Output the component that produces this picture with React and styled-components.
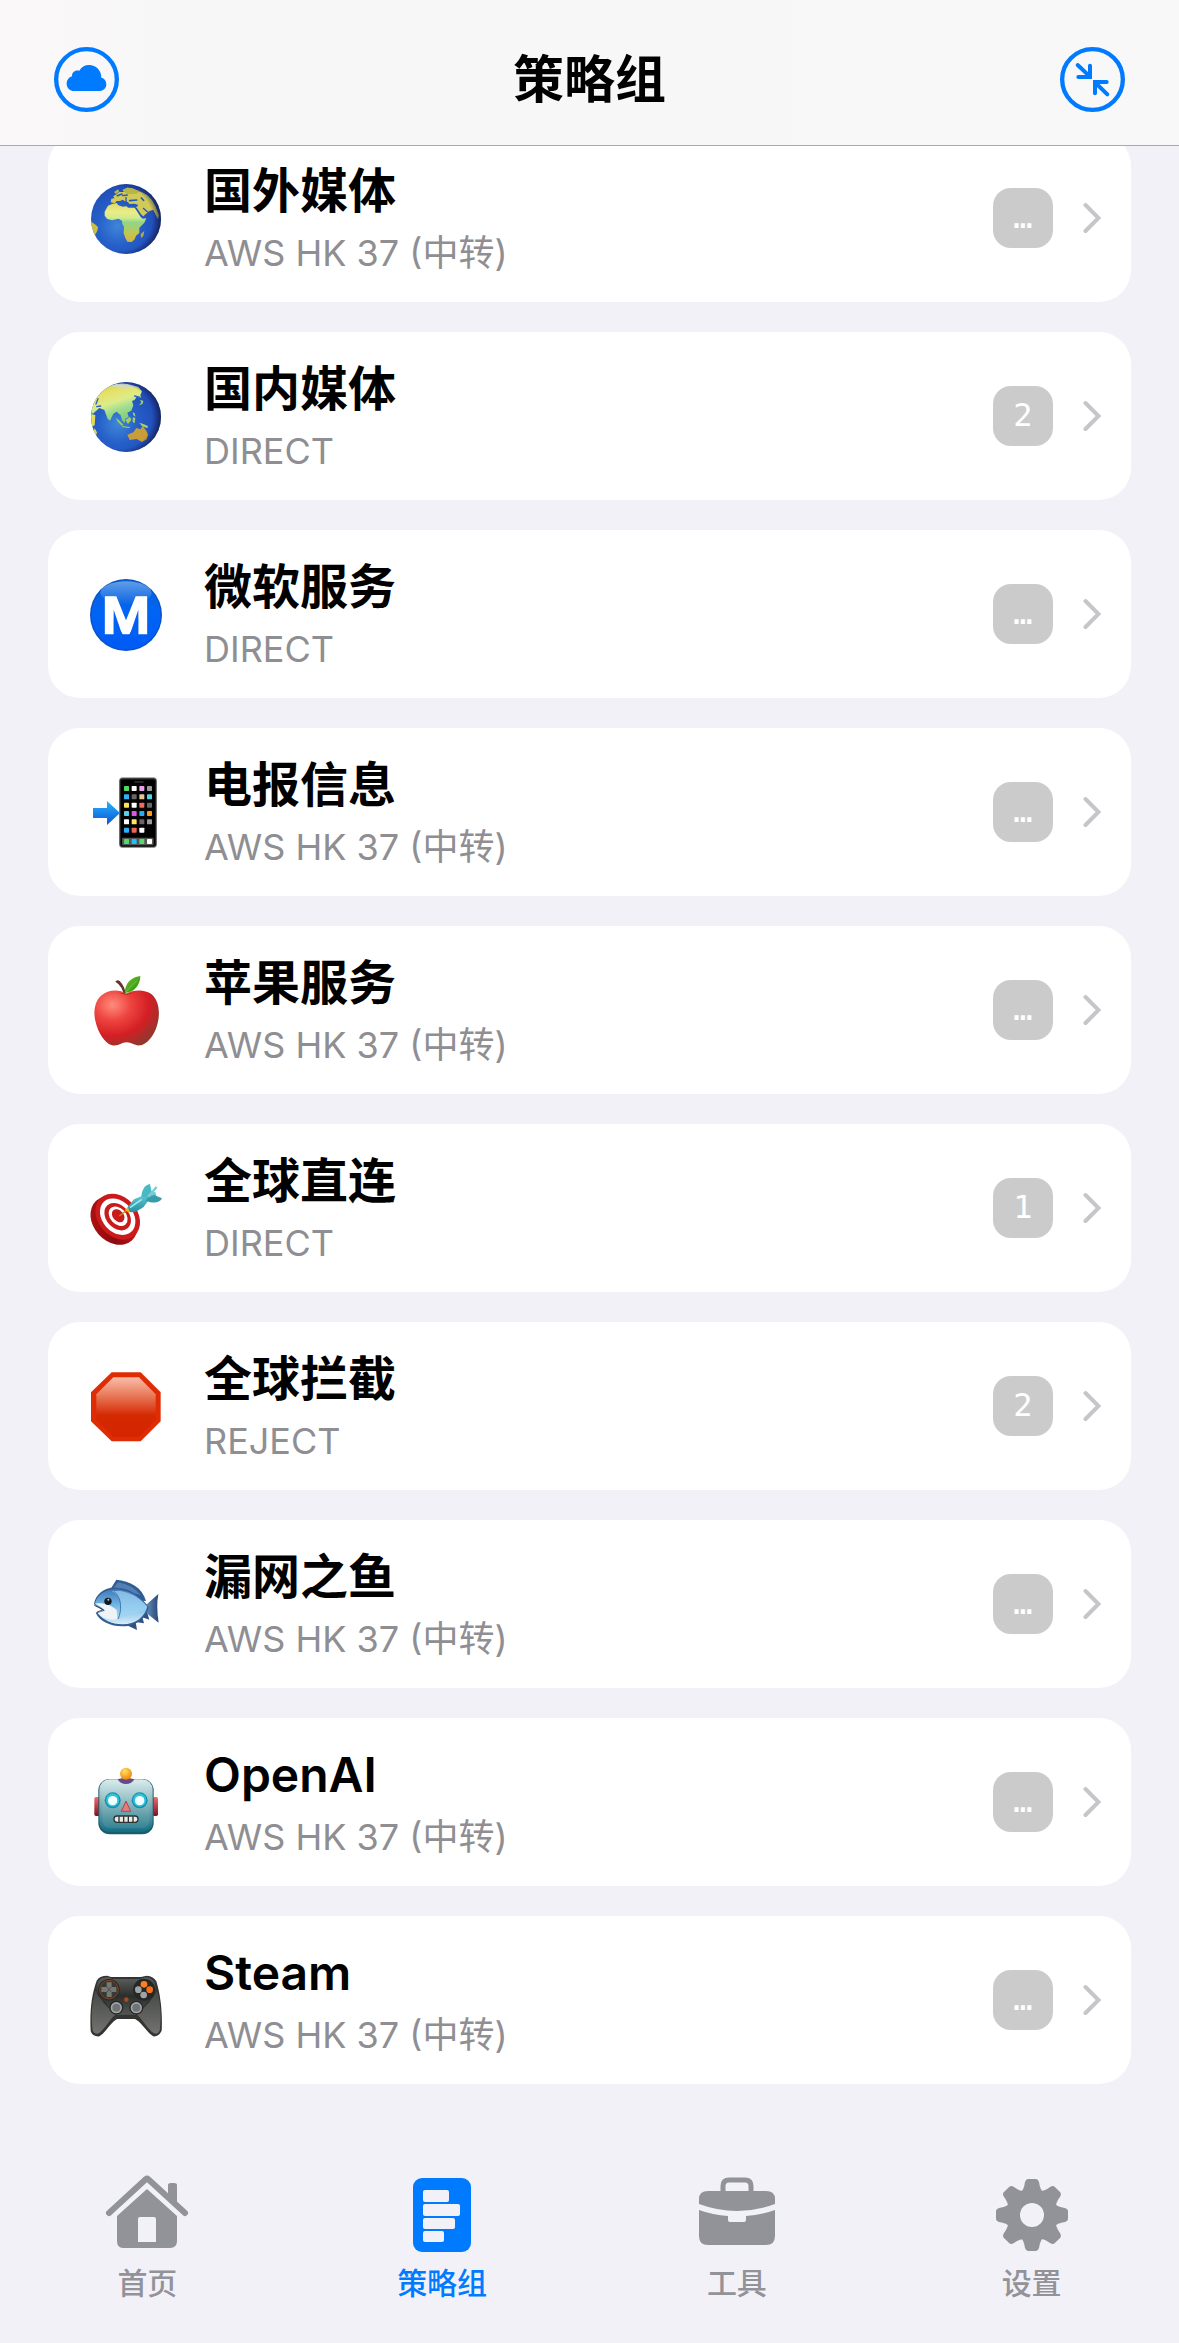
import React from "react";
import styled, { createGlobalStyle } from "styled-components";

const GlobalStyle = createGlobalStyle`
  *, *::before, *::after { box-sizing: border-box; }
  body {
    margin: 0;
    background: #f2f1f8;
    color: #000;
    font-family: Inter, "Noto Sans CJK SC", sans-serif;
  }
`;

const Screen = styled.div`
  display: flex;
  flex-direction: column;
  min-height: 100vh;
`;

const Header = styled.header`
  position: sticky;
  top: 0;
  z-index: 1;
  display: flex;
  align-items: center;
  justify-content: space-between;
  padding: 40px 54px 26px;
  background: linear-gradient(90deg, #faf8f8, #f7f7f7 25%, #f8f8f9);
  border-bottom: 1px solid #a9a8ae;
`;

const Title = styled.h1`
  margin: 0;
  font-size: 51px;
  line-height: 79px;
  font-weight: 600;
`;

const RoundButton = styled.button`
  display: flex;
  width: 65px;
  height: 65px;
  padding: 0;
  border: 0;
  border-radius: 50%;
  background: none;
  color: #007aff;
  cursor: pointer;
`;

const List = styled.ul`
  display: flex;
  flex-direction: column;
  gap: 30px;
  margin: -12px 0 0;
  padding: 0 48px;
  list-style: none;
`;

const Card = styled.button`
  display: flex;
  align-items: center;
  gap: 42px;
  width: 100%;
  height: 168px;
  padding: 0 30px 0 42px;
  border: 0;
  border-radius: 32px;
  background: #fff;
  color: inherit;
  font: inherit;
  text-align: left;
  cursor: pointer;
`;

const Emoji = styled.svg`
  flex: none;
  width: 72px;
  height: 72px;
  overflow: visible;
`;

const Texts = styled.span`
  display: flex;
  flex: 1;
  flex-direction: column;
  min-width: 0;
  padding-top: 4px;
`;

const Name = styled.span`
  font-size: 48px;
  line-height: 66px;
  font-weight: 600;
`;

const Selected = styled.span`
  font-size: 36px;
  line-height: 58px;
  color: #8e8e93;
`;

const Trailing = styled.span`
  display: flex;
  align-items: center;
  gap: 30px;
`;

const Count = styled.span`
  width: 60px;
  height: 60px;
  border-radius: 18px;
  background: #cbcbcb;
  color: #fff;
  font-family: "DejaVu Sans Mono", monospace;
  font-size: 32px;
  line-height: 58px;
  text-align: center;
`;

const TabBar = styled.nav`
  display: grid;
  grid-template-columns: repeat(4, 1fr);
  margin-top: auto;
  padding: 24px 0 40px;
`;

const Tab = styled.a`
  display: flex;
  flex-direction: column;
  align-items: center;
  gap: 10px;
  color: ${(p) => (p.$active ? "#007aff" : "#929299")};
  font-size: 30px;
  line-height: 40px;
  font-weight: 500;
  text-decoration: none;
`;

const TabIcon = styled.svg`
  width: 84px;
  height: 80px;
`;

const Chevron = () => (
  <svg width="18" height="32" viewBox="0 0 18 32" fill="none" stroke="#c5c5ca" strokeWidth="4" strokeLinecap="round" strokeLinejoin="miter" aria-hidden="true">
    <path d="M2.5 3 L15.5 16 L2.5 29" />
  </svg>
);

const CloudIcon = () => (
  <svg width="65" height="65" viewBox="42 51 195 195" aria-hidden="true">
    <circle cx="139.500" cy="148.500" r="91" fill="none" stroke="currentColor" strokeWidth="13" />
    <path fill="currentColor" d="M103 183C90 183 80 174 80 161C80 150 87 142 96 139C95 127 105 119 118 122C124 111 134 105 147 105C168 105 184 121 184 143C193 145 199 153 199 163C199 175 190 183 179 183Z" />
  </svg>
);

const CollapseIcon = () => (
  <svg width="65" height="65" viewBox="60 51 195 195" fill="none" stroke="currentColor" strokeLinecap="round" aria-hidden="true">
    <circle cx="157.500" cy="148.500" r="91" strokeWidth="13" />
    <g strokeWidth="12">
      <path d="M113 105L149 139" />
      <path d="M150 107V141H115" />
      <path d="M202 193L167 159" />
      <path d="M165 190V156H200" />
    </g>
  </svg>
);

const Grad = ({ id, from, to, mid }) => (
  <linearGradient id={id} x1="0" y1="0" x2="0" y2="1">
    <stop offset="0" stopColor={from} />
    {mid && <stop offset="0.5" stopColor={mid} />}
    <stop offset="1" stopColor={to} />
  </linearGradient>
);

const GlobeDefs = ({ id }) => (
  <defs>
    <radialGradient id={id} cx="0.38" cy="0.6" r="0.62">
      <stop offset="0" stopColor="#3f86d8" />
      <stop offset="0.45" stopColor="#265fc9" />
      <stop offset="1" stopColor="#1f49b4" />
    </radialGradient>
    <radialGradient id={id + "-shade"} cx="0.42" cy="0.5" r="0.6">
      <stop offset="0.76" stopColor="#101848" stopOpacity="0" />
      <stop offset="1" stopColor="#101030" stopOpacity="0.8" />
    </radialGradient>
    <linearGradient id={id + "-land"} gradientUnits="userSpaceOnUse" x1="0" y1="6" x2="0" y2="216">
      <stop offset="0" stopColor="#b5b440" />
      <stop offset="0.25" stopColor="#ddd95c" />
      <stop offset="0.4" stopColor="#e9ec88" />
      <stop offset="0.48" stopColor="#d6ea8c" />
      <stop offset="0.55" stopColor="#93d586" />
      <stop offset="0.64" stopColor="#a9cf69" />
      <stop offset="0.74" stopColor="#cfbf4a" />
      <stop offset="1" stopColor="#c8a53a" />
    </linearGradient>
    <linearGradient id={id + "-east"} gradientUnits="userSpaceOnUse" x1="20" y1="10" x2="60" y2="130">
      <stop offset="0" stopColor="#c9cb58" />
      <stop offset="0.3" stopColor="#e6e168" />
      <stop offset="0.55" stopColor="#dcec8a" />
      <stop offset="0.75" stopColor="#a0dd90" />
      <stop offset="1" stopColor="#84cc7c" />
    </linearGradient>
    <clipPath id={id + "-clip"}>
      <circle cx="108" cy="111" r="105" />
    </clipPath>
  </defs>
);

const GlobeAfrica = () => (
  <Emoji viewBox="0 0 216 216" aria-hidden="true">
    <GlobeDefs id="africa" />
    <circle cx="108" cy="111" r="105" fill="url(#africa)" />
    <g clipPath="url(#africa-clip)">
      <path fill="url(#africa-land)" d="M54 71L66 66 80 63 85 70 98 74 110 73 114 77 134 77 140 86 152 105 158 110 169 109 163 122 148 137 148 153 138 161 134 172 125 180 112 179 106 168 101 154 102 134 97 126 96 117 86 110 66 115 52 111 44 101 44 89Z" />
      <path fill="#d2ca56" d="M62 61L64 50 73 49 70 42 80 37 88 30 102 30 98 24 112 17 126 19 140 25 156 31 172 40 186 54 197 74 207 100 204 112 198 100 190 84 180 86 174 90 160 103 148 94 137 78 145 69 134 65 118 66 114 60 105 58 98 53 90 57 80 57 74 64Z" />
      <path fill="#b5b646" d="M72 30L84 22 88 29 78 36ZM98 24L112 17 126 19 148 27 140 36 110 36Z" />
      <path fill="#c9bf45" d="M0 118C8 122 22 130 24 137 23 150 15 158 8 166L0 160Z" />
      <path fill="#c8a53a" d="M152 156L163 147 160 162 153 168Z" />
      <g fill="none" stroke="#2457bc" strokeLinecap="round">
        <path strokeWidth="5" d="M88 60L102 61 114 68 134 70M119 56L140 54M154 48L161 55M82 41L96 36" />
        <path strokeWidth="4" d="M139 79L155 103M160 79L172 89M98 41L112 39M108 46V63" />
      </g>
    </g>
    <circle cx="108" cy="111" r="105" fill="url(#africa-shade)" />
  </Emoji>
);

const GlobeAsia = () => (
  <Emoji viewBox="0 0 216 216" aria-hidden="true">
    <GlobeDefs id="asia" />
    <circle cx="108" cy="111" r="105" fill="url(#asia)" />
    <g clipPath="url(#asia-clip)">
      <path fill="url(#asia-east)" d="M2 84L8 64 22 44 38 28 60 18 90 12 120 16 144 20 156 34 151 46 154 54 140 50 134 60 126 63 130 76 124 92 112 98 116 111 106 116 104 129 96 120 92 106 80 95 70 101 60 122 53 116 43 90 28 84 18 93 8 102 3 92Z" />
      <path fill="#e2dc58" d="M3 102L16 105 14 136 4 140ZM14 145L21 157 18 166 10 156Z" />
      <path fill="#cfd8c4" d="M60 18Q92 4 132 17L144 25 118 21 100 26 78 20Z" />
      <path fill="#c99d38" d="M112 164L130 157 139 144 151 148 158 138 169 152 174 164 170 178 156 186 140 177 119 180Z" />
      <path fill="#a0d064" d="M78 114L86 120 100 134 96 138 82 124ZM106 120L120 110 124 120 114 132ZM96 138L120 141 118 144 98 142ZM148 128L160 132 174 138 172 145 156 139ZM128 112L136 114 134 130 128 126ZM128 96L134 100 137 110 130 106ZM150 60L160 62 158 72 146 76 154 68Z" />
      <path fill="none" stroke="#2b62c2" strokeWidth="4" strokeLinecap="round" d="M24 56L18 72M20 80L32 78M134 48L150 52" />
    </g>
    <circle cx="108" cy="111" r="105" fill="url(#asia-shade)" />
  </Emoji>
);

const Metro = () => (
  <Emoji viewBox="150 114 216 216" aria-hidden="true">
    <defs>
      <Grad id="metro" from="#0a62d6" mid="#0064f6" to="#0059f4" />
      <Grad id="metro-shine" from="#6ea8ea" to="#0f66e4" />
    </defs>
    <circle cx="258" cy="225" r="108" fill="#0752c4" />
    <circle cx="258" cy="225" r="104" fill="url(#metro)" />
    <ellipse cx="258" cy="158" rx="77" ry="34" fill="url(#metro-shine)" opacity="0.85" />
    <path fill="none" stroke="#fff" strokeWidth="27" strokeLinejoin="miter" d="M208 283V170M308 283V170" />
    <path fill="#fff" d="M195 169H229L258 241 287 169H321V195L268 283H248L195 195Z" />
    <path fill="#0261f3" d="M221 209V283H246ZM295 209V283H270Z" />
  </Emoji>
);

const APPS = [
  ["#54d863", "#fff", "#e5a2f0", "#999"],
  ["#2fb2f8", "#666", "#e7c39a", "#4bd7e8"],
  ["#ffe15a", "#fff", "#f26a5d", "#666"],
  ["#57cfe4", "#d958e0", "#2aa9f6", "#ff9a16"],
  ["#fff", "#ffe566", "#666", "#999"],
  ["#27b1fa", "#ef655c", "#fff"],
];

const Phone = () => (
  <Emoji viewBox="150 708 216 216" aria-hidden="true">
    <defs>
      <Grad id="arrow" from="#2bb0fb" to="#0957d6" />
    </defs>
    <rect x="237" y="712" width="114" height="212" rx="11" fill="#969696" />
    <rect x="239" y="715" width="110" height="206" rx="9" fill="#222" />
    <rect x="243" y="719" width="102" height="198" rx="5" fill="#000" />
    <rect x="283" y="724" width="28" height="4" rx="2" fill="#333" />
    <rect x="246" y="893" width="95" height="23" rx="4" fill="#555" />
    {APPS.map((row, y) =>
      row.map((fill, x) => (
        <rect key={x + "-" + y} x={252 + x * 23} y={738 + y * 25} width="15" height="15" rx="2" fill={fill} />
      ))
    )}
    {["#55d86a", "#25bdfa", "#54dc68", "#fff"].map((fill, x) => (
      <rect key={fill} x={252 + x * 23} y="897" width="15" height="15" rx="2" fill={fill} />
    ))}
    <path fill="url(#arrow)" d="M159 804H201V783L240 819 201 855V834H159Z" />
  </Emoji>
);

const Apple = () => (
  <Emoji viewBox="150 102 216 216" aria-hidden="true">
    <defs>
      <radialGradient id="apple" cx="0.28" cy="0.26" r="0.8">
        <stop offset="0" stopColor="#ff8d7d" />
        <stop offset="0.35" stopColor="#ee4540" />
        <stop offset="0.7" stopColor="#d41f24" />
        <stop offset="1" stopColor="#97352d" />
      </radialGradient>
      <linearGradient id="leaf" x1="0" y1="0" x2="1" y2="1">
        <stop offset="0" stopColor="#6fc529" />
        <stop offset="1" stopColor="#278d10" />
      </linearGradient>
    </defs>
    <path fill="url(#apple)" d="M259 161C236 146 203 150 183 167C163 185 160 218 166 242C174 279 194 309 216 316C236 320 243 307 260 307C278 307 283 320 306 315C330 306 349 275 355 240C360 208 354 180 335 163C313 147 280 149 259 161Z" />
    <path fill="#b42823" d="M235 157Q260 172 286 155Q261 166 235 157Z" />
    <path fill="#61362a" d="M226 125Q231 117 239 123Q254 139 257 160L251 160Q246 142 235 132Z" />
    <path fill="url(#leaf)" d="M254 159C255 130 272 112 301 108C301 134 282 159 254 159Z" />
    <path d="M257 156L291 121" stroke="#8cce52" strokeWidth="2" />
  </Emoji>
);

const Target = () => (
  <Emoji viewBox="150 696 216 216" aria-hidden="true">
    <defs>
      <linearGradient id="rim" x1="0" y1="0" x2="1" y2="1">
        <stop offset="0" stopColor="#b91315" />
        <stop offset="0.5" stopColor="#8d0a0d" />
        <stop offset="1" stopColor="#cf1b1c" />
      </linearGradient>
      <Grad id="dart" from="#75dbe5" to="#278c9c" />
    </defs>
    <ellipse cx="222" cy="842" rx="62" ry="80" transform="rotate(-42 222 842)" fill="url(#rim)" />
    <g transform="rotate(-42 233 830)">
      <ellipse cx="233" cy="830" rx="59" ry="76" fill="#cb1a1c" />
      <ellipse cx="233" cy="830" rx="46" ry="61" fill="#fff" />
      <ellipse cx="233" cy="830" rx="34" ry="46" fill="#c81b1c" />
      <ellipse cx="235" cy="830" rx="24" ry="33" fill="#fff" />
      <ellipse cx="236" cy="829" rx="16" ry="22" fill="#c81b1c" />
    </g>
    <path d="M238 828L264 808" stroke="#b88a19" strokeWidth="4" />
    <path fill="#e4b91e" d="M255 810L264 800 273 812 267 818Z" />
    <path fill="url(#dart)" d="M263 801L282 778 304 769 319 750 346 756 351 775 326 781 310 802 286 816 270 817Z" />
    <path fill="#47bac5" d="M304 769C306 747 316 734 330 732L335 756 322 774Z" />
    <path fill="#369baa" d="M322 774L342 765 366 775C361 788 342 792 317 782Z" />
    <path d="M324 770L350 741" stroke="#7dcad1" strokeWidth="7" />
    <path d="M270 803L305 778" stroke="#a4eff2" strokeWidth="4" />
  </Emoji>
);

const StopSign = () => (
  <Emoji viewBox="150 90 216 216" aria-hidden="true">
    <defs>
      <linearGradient id="stop" x1="0" y1="0" x2="0" y2="1">
        <stop offset="0" stopColor="#f9bda9" />
        <stop offset="0.3" stopColor="#e97b5b" />
        <stop offset="0.64" stopColor="#d42902" />
        <stop offset="1" stopColor="#d42500" />
      </linearGradient>
    </defs>
    <path fill="#df2c05" d="M215 97H302L362 157V244L302 304H215L153 244V157Z" />
    <path fill="url(#stop)" d="M220 112H297L347 163V240L297 290H220L169 240V163Z" />
  </Emoji>
);

const Fish = () => (
  <Emoji viewBox="150 684 216 216" aria-hidden="true">
    <defs>
      <Grad id="fish" from="#4179ba" mid="#78bce9" to="#d9edf6" />
      <linearGradient id="tail" x1="0" y1="0" x2="1" y2="0">
        <stop offset="0" stopColor="#709ac8" />
        <stop offset="1" stopColor="#254674" />
      </linearGradient>
    </defs>
    <path fill="#315b94" d="M210 750L229 719C270 724 306 741 318 783L280 781Z" />
    <path fill="#547fb5" d="M221 743L234 727Q278 735 302 765Z" />
    <path fill="#305180" d="M248 850L291 870 287 846 312 850 307 832 328 839 320 812Z" />
    <path fill="url(#tail)" d="M312 800L355 762Q348 800 356 848L316 817Z" />
    <path fill="#335c91" d="M162 793C166 763 194 741 229 743C269 744 302 768 326 801C321 834 287 860 247 859C211 858 180 845 167 818L190 812Z" />
    <path fill="url(#fish)" d="M165 792C169 767 195 747 228 748C267 749 298 770 322 800C314 831 285 854 246 853C215 852 188 840 173 819L195 812Z" />
    <path fill="#edf3f7" d="M165 791C188 787 214 795 230 810L232 838C206 843 183 832 173 819L195 812 184 802Z" />
    <path fill="#9fd4f2" d="M215 754C247 768 249 806 235 836L316 809 322 800Q286 759 240 752Z" opacity="0.7" />
    <path fill="none" stroke="#427aae" strokeWidth="3" d="M222 754C246 774 246 812 234 837" />
    <path fill="none" stroke="#33435b" strokeWidth="3" d="M163 796L190 809 170 817" />
    <circle cx="204" cy="784" r="11" fill="#101922" />
    <circle cx="205" cy="779" r="3" fill="#b9cfdd" />
  </Emoji>
);

const Robot = () => (
  <Emoji viewBox="150 78 216 216" aria-hidden="true">
    <defs>
      <Grad id="robot" from="#dcecec" mid="#7aacb3" to="#136d82" />
      <Grad id="ear" from="#f56a6d" to="#7d1020" />
      <radialGradient id="bulb" cx="0.4" cy="0.3" r="0.7">
        <stop offset="0" stopColor="#ffe066" />
        <stop offset="1" stopColor="#ee8708" />
      </radialGradient>
    </defs>
    <rect x="163" y="171" width="16" height="57" rx="5" fill="url(#ear)" />
    <rect x="338" y="171" width="16" height="57" rx="5" fill="url(#ear)" />
    <rect x="175" y="117" width="166" height="166" rx="34" fill="#1a5b6c" />
    <rect x="178" y="118" width="160" height="158" rx="31" fill="url(#robot)" />
    <rect x="187" y="127" width="142" height="138" rx="24" fill="#d5f5f7" opacity="0.1" />
    <path fill="#674a87" d="M233 118Q258 110 283 118Q276 132 258 132Q240 132 233 118Z" />
    <circle cx="258" cy="101" r="18" fill="url(#bulb)" />
    {[218, 299].map((cx) => (
      <g key={cx}>
        <circle cx={cx} cy="181" r="24" fill="#128fad" />
        <circle cx={cx} cy="180" r="20" fill="#2fc2d7" />
        <circle cx={cx} cy="182" r="14" fill="#f1ffff" />
      </g>
    ))}
    <path fill="#e27b80" stroke="#b3444e" strokeWidth="3" strokeLinejoin="round" d="M258 183L272 214H244Z" />
    <rect x="220" y="226" width="76" height="23" rx="11" fill="#29343a" />
    <rect x="224" y="230" width="68" height="15" rx="7" fill="#efe9df" />
    <path stroke="#29343a" strokeWidth="4" d="M237 229V246M251 229V246M265 229V246M279 229V246" />
  </Emoji>
);

const Gamepad = () => (
  <Emoji viewBox="150 672 216 216" aria-hidden="true">
    <defs>
      <Grad id="pad" from="#5c605b" mid="#2c2e2c" to="#555753" />
      <Grad id="grip" from="#464845" to="#72736e" />
    </defs>
    <path fill="#333533" d="M170 722Q178 707 202 707L213 711H303L320 707Q341 709 349 724C362 766 368 820 365 872Q356 891 340 889C324 881 305 847 285 837H231C213 846 194 881 178 889Q158 891 152 873C149 818 154 765 170 722Z" />
    <path fill="url(#grip)" d="M166 752C154 790 153 837 158 872Q164 884 176 880C193 869 209 838 226 824L190 788ZM351 752C363 790 364 837 359 872Q353 884 342 880C324 869 308 838 291 824L327 788Z" />
    <path fill="url(#pad)" d="M174 724Q184 712 205 712L217 717H299L318 712Q337 714 344 728C354 755 344 775 321 784L301 814Q292 828 280 824H238Q223 828 215 814L196 783C172 777 163 753 174 724Z" />
    <circle cx="207" cy="749" r="32" fill="#242725" />
    <circle cx="207" cy="749" r="28" fill="#363936" stroke="#894527" strokeWidth="3" />
    <path fill="#747971" d="M200 727H215V741H229V756H215V771H200V756H184V741H200Z" />
    <path stroke="#3a3d39" strokeWidth="2" d="M201 741L214 756M214 741L201 756" />
    <circle cx="312" cy="749" r="33" fill="#252826" />
    <circle cx="312" cy="733" r="10" fill="#ff8024" />
    <circle cx="329" cy="749" r="10" fill="#f57018" />
    <circle cx="295" cy="749" r="10" fill="#a1a4a5" />
    <circle cx="311" cy="765" r="10" fill="#a1a4a5" />
    <circle cx="259" cy="779" r="7" fill="#a34a20" />
    {[229, 289].map((cx) => (
      <g key={cx}>
        <circle cx={cx} cy="803" r="21" fill="#242624" />
        <circle cx={cx} cy="803" r="17" fill="#a3a5a6" />
        <circle cx={cx} cy="803" r="12" fill="#717477" />
      </g>
    ))}
  </Emoji>
);

const HomeIcon = () => (
  <TabIcon viewBox="0 0 84 80" fill="currentColor" aria-hidden="true">
    <path d="M4 40L41 6Q42 5 43 6L80 40" fill="none" stroke="currentColor" strokeWidth="6" strokeLinecap="round" />
    <path d="M63 22V12Q63 10 66 10H69Q72 10 72 12V30Z" />
    <path fillRule="evenodd" d="M42 16L72 43V68Q72 75 65 75H18Q12 75 12 68V43ZM35 44Q33 44 33 46V69H51V46Q51 44 49 44Z" />
  </TabIcon>
);

const GroupIcon = () => (
  <TabIcon viewBox="0 0 84 80" aria-hidden="true">
    <rect x="13" y="5" width="58" height="74" rx="9" fill="currentColor" />
    <g fill="#f2f1f8">
      <rect x="23" y="17" width="26" height="12" rx="2" />
      <rect x="23" y="31" width="37" height="12" rx="2" />
      <rect x="23" y="45" width="32" height="11" rx="2" />
      <rect x="23" y="58" width="21" height="11" rx="2" />
    </g>
  </TabIcon>
);

const ToolsIcon = () => (
  <TabIcon viewBox="0 0 84 80" fill="currentColor" aria-hidden="true">
    <path d="M28 20V13Q28 7 34 7H50Q56 7 56 13V20" fill="none" stroke="currentColor" strokeWidth="5" />
    <path d="M4 31V26Q4 18 13 18H71Q80 18 80 26V31Q42 45 4 31Z" />
    <path d="M4 37Q18 42 33 43V47Q33 49 35 49H49Q51 49 51 47V43Q66 42 80 37V63Q80 72 71 72H13Q4 72 4 63Z" />
  </TabIcon>
);

const SettingsIcon = () => (
  <TabIcon viewBox="0 0 84 80" fill="currentColor" aria-hidden="true">
    {[0, 45, 90, 135, 180, 225, 270, 315].map((angle) => (
      <path key={angle} transform={`rotate(${angle} 42 42)`} d="M30 20Q34 17 35 9Q36 6 38 6H46Q48 6 49 9Q50 17 54 20V30H30Z" />
    ))}
    <circle cx="42" cy="42" r="25" />
    <circle cx="42" cy="42" r="12" fill="#f2f1f8" />
  </TabIcon>
);

const RELAY = "AWS HK 37 (中转)";

const GROUPS = [
  { name: "国外媒体", selected: RELAY, count: "…", Icon: GlobeAfrica },
  { name: "国内媒体", selected: "DIRECT", count: "2", Icon: GlobeAsia },
  { name: "微软服务", selected: "DIRECT", count: "…", Icon: Metro },
  { name: "电报信息", selected: RELAY, count: "…", Icon: Phone },
  { name: "苹果服务", selected: RELAY, count: "…", Icon: Apple },
  { name: "全球直连", selected: "DIRECT", count: "1", Icon: Target },
  { name: "全球拦截", selected: "REJECT", count: "2", Icon: StopSign },
  { name: "漏网之鱼", selected: RELAY, count: "…", Icon: Fish },
  { name: "OpenAI", selected: RELAY, count: "…", Icon: Robot },
  { name: "Steam", selected: RELAY, count: "…", Icon: Gamepad },
];

const TABS = [
  { label: "首页", href: "#home", Icon: HomeIcon },
  { label: "策略组", href: "#groups", Icon: GroupIcon, active: true },
  { label: "工具", href: "#tools", Icon: ToolsIcon },
  { label: "设置", href: "#settings", Icon: SettingsIcon },
];

export default function App() {
  return (
    <Screen lang="zh-CN">
      <GlobalStyle />
      <Header>
        <RoundButton type="button" aria-label="云端">
          <CloudIcon />
        </RoundButton>
        <Title>策略组</Title>
        <RoundButton type="button" aria-label="收起">
          <CollapseIcon />
        </RoundButton>
      </Header>
      <main>
        <List>
          {GROUPS.map(({ name, selected, count, Icon }) => (
            <li key={name}>
              <Card type="button">
                <Icon />
                <Texts>
                  <Name>{name}</Name>
                  <Selected>{selected}</Selected>
                </Texts>
                <Trailing>
                  <Count>{count}</Count>
                  <Chevron />
                </Trailing>
              </Card>
            </li>
          ))}
        </List>
      </main>
      <TabBar>
        {TABS.map(({ label, href, Icon, active }) => (
          <Tab key={label} href={href} $active={active} aria-current={active ? "page" : undefined}>
            <Icon />
            {label}
          </Tab>
        ))}
      </TabBar>
    </Screen>
  );
}
